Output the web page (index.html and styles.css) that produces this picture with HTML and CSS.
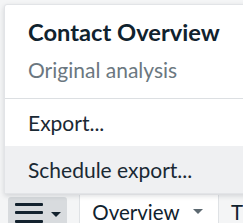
FILE: index.html
```html
<!DOCTYPE html>
<html>
<head>
<meta charset="utf-8">
<link rel="stylesheet" href="styles.css">
</head>
<body>
<div class="page">
  <div class="canvas"></div>
  <div class="toolbar">
    <button class="menu-btn">
      <span class="bars"><i></i><i></i><i></i></span>
      <span class="caret"></span>
    </button>
    <div class="sep"></div>
    <div class="tab">
      <span class="tab-label">Overview</span>
      <span class="caret"></span>
    </div>
    <div class="tab tab-next"><span class="tab-label">T</span></div>
  </div>
  <div class="popover">
    <div class="pop-head">
      <div class="pop-title">Contact Overview</div>
      <div class="pop-sub">Original analysis</div>
    </div>
    <div class="pop-item">Export...</div>
    <div class="pop-item active">Schedule export...</div>
  </div>
</div>
</body>
</html>
```
FILE: styles.css
```css
html, body { margin: 0; padding: 0; }
body {
  background: #f4f5f6;
  font-family: Lato, "Noto Sans", sans-serif;
}
.page { position: relative; width: 243px; height: 223px; overflow: hidden; }
.canvas { height: 195px; }
.toolbar {
  display: flex;
  align-items: stretch;
  height: 28px;
  padding-left: 8px;
}
.menu-btn {
  display: flex;
  align-items: flex-start;
  gap: 8px;
  width: 60px;
  padding: 0 0 0 7px;
  border: 0;
  background: #d8dbde;
  border-radius: 3px 3px 0 0;
  margin-top: 2px;
}
.bars {
  display: flex;
  flex-direction: column;
  gap: 5.5px;
  width: 28px;
  margin-top: 5.5px;
}
.bars i { display: block; height: 3px; background: #13222e; border-radius: 1px; }
.caret {
  width: 0; height: 0;
  border-left: 5px solid transparent;
  border-right: 5px solid transparent;
  border-top: 5px solid #13222e;
}
.menu-btn .caret { margin-top: 15px; }
.sep { width: 12px; border-right: 1px solid #dfe2e5; }
.tab {
  display: flex;
  align-items: flex-start;
  gap: 13px;
  width: 140px;
  padding: 4px 0 0 12px;
  box-sizing: border-box;
  background: #ffffff;
  border-right: 1px solid #dfe2e5;
  font-size: 20.5px;
  line-height: 26px;
  color: #10222e;
}
.tab .caret { border-top-color: #5c6870; margin-top: 10px; }
.tab-next { background: transparent; border: 0; width: auto; padding-left: 12px; }
.popover {
  position: absolute;
  left: 4px;
  top: 4px;
  right: -30px;
  background: #ffffff;
  border: 1px solid #e2e4e7;
  border-radius: 3px;
  box-shadow: 0 2px 5px rgba(20, 30, 40, 0.15);
}
.pop-head {
  padding: 12px 0 15px 23px;
  border-bottom: 1px solid #dcdfe2;
}
.pop-title {
  font-size: 23.7px;
  font-weight: 700;
  color: #10222e;
  line-height: 30px;
}
.pop-sub {
  font-size: 21px;
  color: #6b7780;
  line-height: 26px;
  margin-top: 10px;
}
.pop-item {
  padding-left: 23px;
  height: 47px;
  line-height: 47px;
  font-size: 21px;
  color: #1a2934;
}
.pop-item.active { background: #eff0f2; }
```
